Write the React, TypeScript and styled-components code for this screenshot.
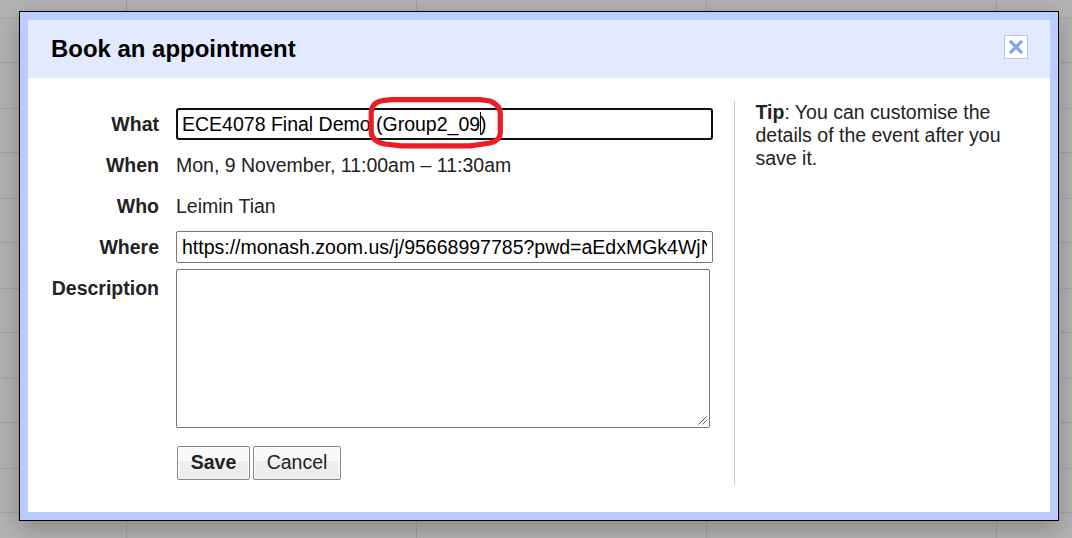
import React from "react";
import styled, { createGlobalStyle, css } from "styled-components";

const Global = createGlobalStyle`
  *, *::before, *::after { box-sizing: border-box; }
  html, body { margin: 0; width: 1072px; height: 538px; overflow: hidden; }
  body { font-family: "Liberation Sans", Arial, sans-serif; font-size: 19.5px; color: #222; }
`;

const Calendar = styled.div`
  width: 1072px;
  height: 538px;
  padding: 11px 13px 17px 19px;
  overflow: hidden;
  background-color: #b3b3b3;
  background-image:
    repeating-linear-gradient(to right, #a1a1a1 0 1px, transparent 1px 290px),
    repeating-linear-gradient(to bottom, #a1a1a1 0 1px, transparent 1px 90px),
    conic-gradient(from 90deg at 1px 1px, transparent 90deg, transparent 270deg, #999 270deg);
  background-size: 290px 100%, 100% 90px, 2px 90px;
  background-position: 126px 0, 0 62px, 1px 18px;
`;

const Dialog = styled.section`
  width: 1040px;
  height: 510px;
  border: 1px solid #000;
  padding: 8px;
  background: #bbccff;
  box-shadow: 0 7px 24px rgba(0, 0, 0, 0.26);
`;

const Header = styled.header`
  height: 58px;
  padding: 0 22px 4px 23px;
  display: flex;
  align-items: center;
  justify-content: space-between;
  background: #e3e9ff;
`;

const Title = styled.h1`
  margin: 4px 0 0;
  font-size: 23.95px;
  line-height: 28px;
  color: #000;
  white-space: nowrap;
`;

const Close = styled.button`
  width: 24px;
  height: 24px;
  padding: 0;
  border: 1px solid #b0c5fd;
  background: #fff;
  svg { display: block; }
`;

const Body = styled.div`
  height: 434px;
  padding: 23px 22px 27px 0;
  display: flex;
  background: #fff;
`;

const Form = styled.div`
  width: 707px;
  padding-top: 7px;
  border-right: 1px solid #ccc;
`;

const Row = styled.div`
  min-height: 41px;
  display: grid;
  grid-template-columns: 131px 537px;
  column-gap: 17px;
`;

const Label = styled.div`
  padding-top: 4px;
  line-height: 24px;
  font-weight: bold;
  text-align: right;
`;

const Value = styled.div`
  padding-top: 4px;
  line-height: 24px;
  white-space: nowrap;
`;

const Field = styled.div<{ $focused?: boolean }>`
  position: relative;
  height: 32px;
  border: ${(p) => (p.$focused ? "2px solid #101010" : "1px solid #767676")};
  border-radius: ${(p) => (p.$focused ? 3 : 2)}px;
  padding: ${(p) => (p.$focused ? "2px 4px" : "3px 5px")};
  line-height: 24px;
  color: #000;
`;

const FieldText = styled.div`
  overflow: hidden;
  white-space: nowrap;
`;

const Caret = styled.span`
  display: inline-block;
  width: 1px;
  height: 23px;
  margin-right: -1px;
  vertical-align: top;
  background: #000;
`;

const Highlight = styled.svg`
  position: absolute;
  left: 190px;
  top: -14px;
`;

const TextArea = styled.div`
  width: 534px;
  height: 159px;
  margin-top: -3px;
  padding: 0 2px 2px 0;
  display: flex;
  align-items: flex-end;
  justify-content: flex-end;
  border: 1px solid #767676;
  border-radius: 2px;
  svg { display: block; }
`;

const Actions = styled.div`
  padding: 18px 0 0 149px;
  display: flex;
  gap: 3px;
`;

const Button = styled.button<{ $primary?: boolean }>`
  width: ${(p) => (p.$primary ? 73 : 88)}px;
  height: 34px;
  padding: 0 0 2px;
  border: 1px solid #888;
  border-radius: 2px;
  font: 19.5px/24px "Liberation Sans", Arial, sans-serif;
  color: #222;
  background: linear-gradient(#f9f9f9 0 14px, #eee 14px);
  box-shadow: inset 1px 0 #fff, inset -1px 0 #fff;
  ${(p) => p.$primary && css`font-weight: bold;`}
`;

const Tip = styled.p`
  margin: 0 0 0 20.5px;
  width: 266px;
  line-height: 23px;
`;

export default function App() {
  return (
    <>
      <Global />
      <Calendar>
        <Dialog>
          <Header>
            <Title>Book an appointment</Title>
            <Close aria-label="Close">
              <svg width="22" height="22" viewBox="0 0 22 22">
                <path d="M5 5 17 17M17 5 5 17" stroke="#84a5ec" strokeWidth="3.2" />
              </svg>
            </Close>
          </Header>
          <Body>
            <Form>
              <Row>
                <Label>What</Label>
                <Field $focused>
                  <FieldText>
                    ECE4078 Final Demo (Group2_09
                    <Caret />)
                  </FieldText>
                  <Highlight width="138" height="56" viewBox="0 0 138 56">
                    <path
                      d="M24 3.700H112L122 5Q132.300 9 132.300 18V37Q132 44.500 122 47L112 48.500L102 49.800H33L17 48Q3.200 45.500 3.200 35V17Q3.200 7 14 4.700Z"
                      fill="none"
                      stroke="#ed1c24"
                      strokeWidth="5.2"
                      strokeLinejoin="round"
                    />
                  </Highlight>
                </Field>
              </Row>
              <Row>
                <Label>When</Label>
                <Value>Mon, 9 November, 11:00am – 11:30am</Value>
              </Row>
              <Row>
                <Label>Who</Label>
                <Value>Leimin Tian</Value>
              </Row>
              <Row>
                <Label>Where</Label>
                <Field>
                  <FieldText>https://monash.zoom.us/j/95668997785?pwd=aEdxMGk4WjN</FieldText>
                </Field>
              </Row>
              <Row>
                <Label>Description</Label>
                <TextArea>
                  <svg width="9" height="9" viewBox="0 0 9 9">
                    <path d="M.5 8.500 8.500.5M4.500 8.500 8.500 4.500" stroke="#555" />
                  </svg>
                </TextArea>
              </Row>
              <Actions>
                <Button $primary>Save</Button>
                <Button>Cancel</Button>
              </Actions>
            </Form>
            <Tip>
              <b>Tip</b>: You can customise the details of the event after you save it.
            </Tip>
          </Body>
        </Dialog>
      </Calendar>
    </>
  );
}
